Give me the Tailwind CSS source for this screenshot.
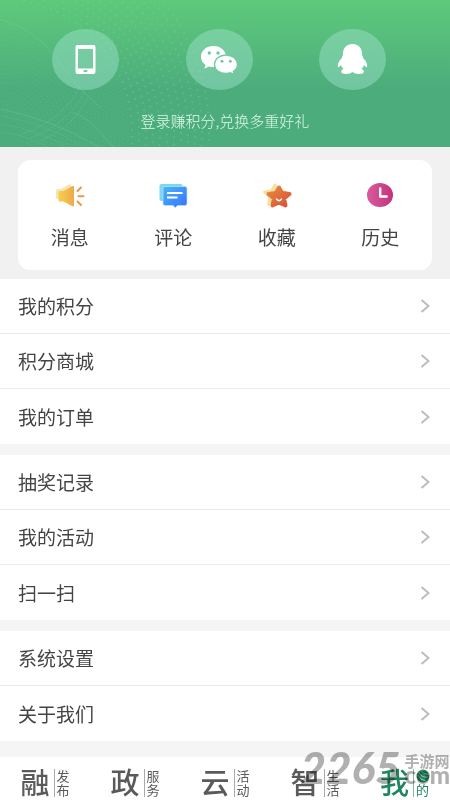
<!DOCTYPE html>
<html lang="zh-CN">
<head>
<meta charset="utf-8">
<meta name="viewport" content="width=device-width, initial-scale=1">
<title>我的</title>
<script src="https://cdn.jsdelivr.net/npm/@tailwindcss/browser@4"></script>
</head>
<body class="flex min-h-screen flex-col overflow-x-hidden bg-[#f5f5f5] font-['Noto_Sans_CJK_SC',sans-serif] text-[#444]">
<header class="relative overflow-hidden bg-linear-to-b from-[#5dca7a] to-[#4dac7c] to-60% pt-[29px] pb-4">
  <svg class="absolute top-0 left-0 h-[147px] w-[225px]" viewBox="0 0 225 147" fill="none" aria-hidden="true">
    <g id="dots" fill="#79d8a6"></g>
    <g stroke="#70d3aa" stroke-opacity=".3">
      <path d="M0 19Q36 29 56 58T100 107"/><path d="M0 109Q52 119 99 147"/><path d="M72 112Q88 118 98 130T114 147"/>
      <path d="M0 116Q46 123 84 147M0 124Q40 130 67 147M0 132Q29 136 48 147" stroke-opacity=".18"/>
      <path d="M20 135Q66 119 81 84M30 138Q69 124 85 91M42 140Q71 130 88 98" stroke-opacity=".22"/>
    </g>
  </svg>
  <div class="relative flex justify-between pr-16 pl-[52px]">
    <button aria-label="手机登录" class="flex h-[61px] w-[67px] items-center justify-center rounded-[50%] bg-[#a0e4cf]/45">
      <svg width="21" height="29" viewBox="0 0 21 29"><path fill="#fff" fill-rule="evenodd" d="M2.500 0h16Q20.500 0 20.500 2v25q0 2-2 2h-16q-2 0-2-2V2q0-2 2-2ZM3 4v19.500h15V4Z"/><rect x="8.500" y="25" width="4" height="2" rx="1" fill="#73caa2"/></svg>
    </button>
    <button aria-label="微信登录" class="flex h-[61px] w-[67px] items-center justify-center rounded-[50%] bg-[#a0e4cf]/45">
      <svg width="38" height="30" viewBox="0 0 38 30"><path fill="#fff" d="M13.500 1C6 1 1 5.800 1 11.700c0 3.400 1.700 6.300 4.600 8.200L4.300 23.700l4.700-2.300q2.200.7 5.500.6C21 22 26 17.300 26 11.600S20.500 1 13.500 1Z"/><path fill="#fff" stroke="#73caa2" stroke-width="1.300" d="M26 10c-6.500 0-11.500 4.100-11.500 9.400S19.500 28.500 26 28.500q2.400 0 4.500-.8l3.800 2-1-3.500c2.600-1.700 4.200-4.100 4.200-6.800C37.500 14.100 32.400 10 26 10Z"/><g fill="#73caa2"><circle cx="9.300" cy="8" r="1.700"/><circle cx="18" cy="8" r="1.700"/><circle cx="22" cy="16.300" r="1.500"/><circle cx="30.300" cy="16.300" r="1.500"/></g></svg>
    </button>
    <button aria-label="QQ登录" class="flex h-[61px] w-[67px] items-center justify-center rounded-[50%] bg-[#a0e4cf]/45">
      <svg width="31" height="31" viewBox="0 0 31 31" fill="#fff"><path d="M15.500 0C9.500 0 6 4.200 5.900 10v1.600Q4.700 12.600 4.900 14C2.300 16.700.8 19.500.8 21.500c0 2.500 1 2.200 3.100-.5.500 1.500 1.400 2.900 2.700 4-1.600.5-2.400 1.300-2.400 2.500 0 1.800 2 2.500 5 2.500 2.800 0 4.800-.7 6.300-1.900 1.500 1.200 3.500 1.900 6.300 1.900 3 0 5-.7 5-2.500 0-1.200-.8-2-2.400-2.500 1.300-1.100 2.200-2.500 2.700-4 2.100 2.700 3.100 3 3.100.5 0-2-1.500-4.800-4.100-7.500q.2-1.400-1-2.400V10C25 4.200 21.500 0 15.500 0Z"/></svg>
    </button>
  </div>
  <p class="relative mt-5 text-center text-[15px] leading-[21px] font-light text-[#dcfaeb]">登录赚积分,兑换多重好礼</p>
</header>

<main class="flex flex-col">
  <section class="bg-[#f1f1f1] px-[18px] pt-[13px] pb-[9px]">
    <div class="grid grid-cols-4 rounded-xl bg-white pt-[22px] pb-[19px] text-[19px] leading-7">
      <a href="#" class="flex flex-col items-center gap-[13px]">
        <svg width="30" height="28" viewBox="0 0 30 28"><defs><linearGradient id="horn"><stop stop-color="#f6cf4e"/><stop offset="1" stop-color="#efa94b"/></linearGradient></defs><path fill="#f8e3b4" d="M2.500 7H6l8-4.500q2-.8 2 1v17q0 2-2 1l-8-4.500H2.500Q1 17 1 15.500v-7Q1 7 2.500 7Z"/><path fill="url(#horn)" d="M5 9h3.500L17 4.300q2-.8 2 1v18q0 1.700-2 .8L8.500 19.500H5q-1.500 0-1.500-1.500v-7.500Q3.500 9 5 9Z"/><path d="m22.500 9 3.500-3.500M23.500 14.300h5M22.500 19.500l3.500 3.500" stroke="#eb9849" stroke-width="2" stroke-linecap="round"/></svg>
        消息</a>
      <a href="#" class="flex flex-col items-center gap-[13px]">
        <svg width="30" height="28" viewBox="0 0 30 28"><defs><linearGradient id="chat" x2="1" y2="1"><stop stop-color="#48b5f7"/><stop offset="1" stop-color="#3971ff"/></linearGradient></defs><rect x="1.500" y="2" width="23" height="17" rx="2" fill="#7bd8ef"/><path fill="url(#chat)" stroke="#b6e6fb" stroke-width=".7" d="M7 4.500h20Q29 4.500 29 6.500v15q0 2-2 2h-7.500l-2.200 2.200-2.300-2.200H7q-2 0-2-2v-15q0-2 2-2Z"/><path d="M9 11h15.500M9 15.500h10.500" stroke="#fff" stroke-width="2"/></svg>
        评论</a>
      <a href="#" class="flex flex-col items-center gap-[13px]">
        <svg width="30" height="28" viewBox="0 0 30 28"><defs><linearGradient id="star" x2="1" y2="1"><stop stop-color="#e58a43"/><stop offset="1" stop-color="#dc5036"/></linearGradient></defs><path fill="#f8df9b" stroke="#f8df9b" stroke-width="3" stroke-linejoin="round" d="m13 3 3.500 6 7 1-5 5 1.300 7.500L13 19l-6.500 3.500L8 15 2.500 10l7-1Z"/><path fill="url(#star)" stroke="url(#star)" stroke-width="4" stroke-linejoin="round" d="m17 5.500 3 5.500 7.500 1-5.500 4.500 1.500 7-6.500-3-6.500 3 1.500-7-5.500-4.500 7.500-1Z"/><path d="M14.500 17q2.500 3.500 5 0" fill="none" stroke="#fff" stroke-width="1.400" stroke-linecap="round"/></svg>
        收藏</a>
      <a href="#" class="flex flex-col items-center gap-[13px]">
        <svg width="30" height="28" viewBox="0 0 30 28"><defs><linearGradient id="clock"><stop stop-color="#d85c9d"/><stop offset="1" stop-color="#c4327e"/></linearGradient></defs><ellipse cx="15" cy="13" rx="13" ry="12" fill="url(#clock)"/><path d="M15.200 6.500v8h6.500" fill="none" stroke="#fff" stroke-width="2.400" stroke-linecap="round" stroke-linejoin="round"/></svg>
        历史</a>
    </div>
  </section>

  <svg class="hidden"><symbol id="chevron" viewBox="0 0 10 16"><path d="m1.500 2 7 6-7 6" fill="none" stroke="#bdbdbd" stroke-width="2"/></symbol></svg>

  <nav aria-label="功能列表" class="flex flex-col gap-[11px] text-[19px] leading-7">
    <div class="divide-y divide-[#ebebeb] bg-white">
      <a href="#" class="flex h-[55px] items-center justify-between pr-5 pl-[18px]">我的积分<svg class="h-4 w-2.5"><use href="#chevron"/></svg></a>
      <a href="#" class="flex h-[55px] items-center justify-between pr-5 pl-[18px]">积分商城<svg class="h-4 w-2.5"><use href="#chevron"/></svg></a>
      <a href="#" class="flex h-[55px] items-center justify-between pr-5 pl-[18px]">我的订单<svg class="h-4 w-2.5"><use href="#chevron"/></svg></a>
    </div>
    <div class="divide-y divide-[#ebebeb] bg-white">
      <a href="#" class="flex h-[55px] items-center justify-between pr-5 pl-[18px]">抽奖记录<svg class="h-4 w-2.5"><use href="#chevron"/></svg></a>
      <a href="#" class="flex h-[55px] items-center justify-between pr-5 pl-[18px]">我的活动<svg class="h-4 w-2.5"><use href="#chevron"/></svg></a>
      <a href="#" class="flex h-[55px] items-center justify-between pr-5 pl-[18px]">扫一扫<svg class="h-4 w-2.5"><use href="#chevron"/></svg></a>
    </div>
    <div class="divide-y divide-[#ebebeb] bg-white">
      <a href="#" class="flex h-[55px] items-center justify-between pr-5 pl-[18px]">系统设置<svg class="h-4 w-2.5"><use href="#chevron"/></svg></a>
      <a href="#" class="flex h-[55px] items-center justify-between pr-5 pl-[18px]">关于我们<svg class="h-4 w-2.5"><use href="#chevron"/></svg></a>
    </div>
  </nav>
</main>

<footer class="relative mt-auto bg-white">
  <nav aria-label="主导航" class="grid grid-cols-5 pt-3 pb-[3px] text-[#5a5a5a]">
    <a href="#" class="flex items-start justify-center gap-1"><span class="text-[29px] leading-6 font-medium">融</span><span class="border-l border-[#aaa] pl-0.5 text-[13px] leading-[14px]">发<br>布</span></a>
    <a href="#" class="flex items-start justify-center gap-1"><span class="text-[29px] leading-6 font-medium">政</span><span class="border-l border-[#aaa] pl-0.5 text-[13px] leading-[14px]">服<br>务</span></a>
    <a href="#" class="flex items-start justify-center gap-1"><span class="text-[29px] leading-6 font-medium">云</span><span class="border-l border-[#aaa] pl-0.5 text-[13px] leading-[14px]">活<br>动</span></a>
    <a href="#" class="flex items-start justify-center gap-1"><span class="text-[29px] leading-6 font-medium">智</span><span class="border-l border-[#aaa] pl-0.5 text-[13px] leading-[14px]">生<br>活</span></a>
    <a href="#" aria-current="page" class="flex items-start justify-center gap-1 text-[#218560]"><span class="text-[29px] leading-6 font-medium">我</span><span class="border-l border-[#83b7a3] pl-0.5 text-[13px] leading-[14px]"><svg width="14" height="14" viewBox="0 0 14 14"><circle cx="7" cy="7" r="6.500" fill="#218560"/><path d="M3 3q2 6 9 5M5 1.500q2 4 8 4M2 6q2 5 8 6" fill="none" stroke="#b9dacb" stroke-width=".8"/></svg>的</span></a>
  </nav>
  <div class="pointer-events-none absolute -top-2 right-0 flex items-start gap-1 text-[#b0b0b0] mix-blend-multiply" aria-hidden="true">
    <span class="font-[Lato] text-[44px] leading-9 font-black italic">2265</span>
    <span class="flex flex-col"><span class="pt-1 text-[15px] leading-4 font-bold">手游网</span><span class="font-[Lato] text-2xl leading-3 font-black">com</span></span>
  </div>
</footer>

<script>
  let out = '';
  for (let r = 20; r < 212; r += r < 130 ? 4 : 7) {
    const step = r < 130 ? 4 : 7;
    for (let a = -1.6; a < 0.3; a += step / r) {
      const x = r * Math.cos(a), y = 132 + r * Math.sin(a) + 4 * Math.sin(r / 22);
      if (x < 0 || y < 0 || y > 147) continue;
      out += `<circle cx="${x.toFixed(1)}" cy="${y.toFixed(1)}" r="${r < 130 ? 0.6 : 1}" opacity="${r < 130 ? 0.25 : 0.35}"/>`;
    }
  }
  document.getElementById('dots').innerHTML = out;
</script>
</body>
</html>
